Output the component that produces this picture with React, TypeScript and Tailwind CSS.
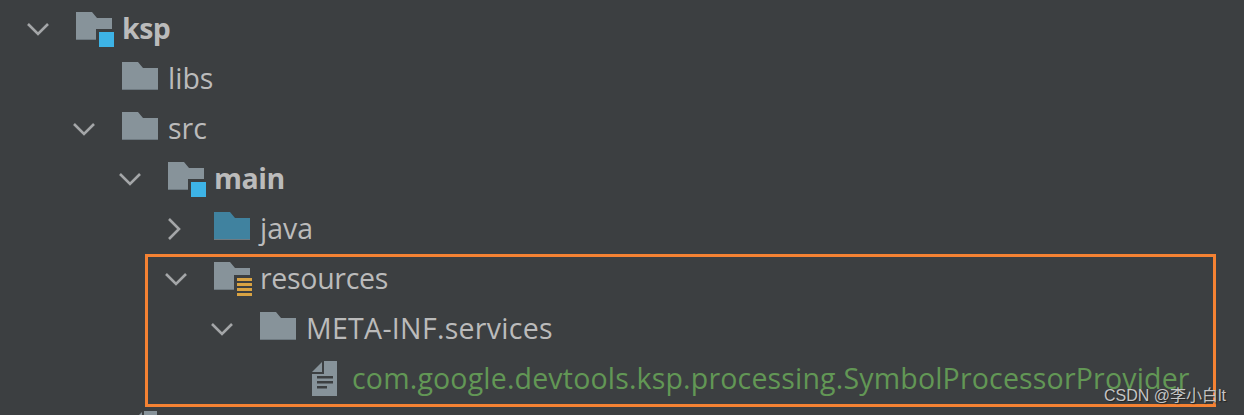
const FOLDER = 'M0 2H16L21 8H36V30H0Z'

function Folder({ color = '#87939a', badge }: { color?: string; badge?: 'module' | 'resources' }) {
  return (
    <svg width="38" height="38" viewBox="0 0 38 38" className="shrink-0">
      <path d={FOLDER} fill={color} />
      <rect x="0" y="29" width="36" height="1" fill="#6f7a81" />
      {badge === 'module' && (
        <>
          <rect x="20" y="19" width="18" height="19" fill="#3c3f41" />
          <rect x="23" y="22" width="15" height="15" fill="#3db3e6" />
        </>
      )}
      {badge === 'resources' && (
        <>
          <rect x="20" y="15" width="18" height="23" fill="#3c3f41" />
          <rect x="23" y="18" width="15" height="3" fill="#d9a343" />
          <rect x="23" y="23" width="15" height="3" fill="#d9a343" />
          <rect x="23" y="28" width="15" height="3" fill="#d9a343" />
          <rect x="23" y="33" width="15" height="3" fill="#d9a343" />
        </>
      )}
    </svg>
  )
}

function FileIcon() {
  return (
    <svg width="38" height="38" viewBox="0 0 38 38" className="shrink-0">
      <path d="M0 12L10 2V12Z" fill="#87939a" />
      <path d="M12 1H25V36H0V14H12Z" fill="#87939a" />
      <rect x="5" y="16" width="16" height="2.5" fill="#3c3f41" />
      <rect x="5" y="21" width="16" height="2.5" fill="#3c3f41" />
      <rect x="5" y="26" width="10" height="2.5" fill="#3c3f41" />
    </svg>
  )
}

function Chevron({ open }: { open: boolean }) {
  return (
    <svg width="24" height="24" viewBox="0 0 24 24" fill="none" stroke="#a4a6a8" strokeWidth="2.6" className="shrink-0">
      {open ? <path d="M2 7L12 17L22 7" /> : <path d="M5 2L15 12L5 22" />}
    </svg>
  )
}

function Row({ indent, chevron, icon, children }: { indent: string; chevron?: 'open' | 'closed'; icon: React.ReactNode; children: React.ReactNode }) {
  return (
    <div className={`flex h-[50px] items-center ${indent}`}>
      <div className="flex w-[63px] shrink-0 justify-start pl-[13px]">
        {chevron && <Chevron open={chevron === 'open'} />}
      </div>
      {icon}
      {children}
    </div>
  )
}

export default function App() {
  const label = 'ml-[8px] pb-[2px] text-[28.5px] leading-[48px] whitespace-nowrap'
  return (
    <div className="relative h-[415px] w-[1244px] overflow-hidden bg-[#3c3f41] pt-[4px] font-['Open_Sans','Noto_Sans',sans-serif] text-[#bbbbbb]">
      <Row indent="pl-[13px]" chevron="open" icon={<Folder badge="module" />}>
        <span className={`${label} font-bold tracking-[-0.5px]`}>ksp</span>
      </Row>
      <Row indent="pl-[59px]" icon={<Folder />}>
        <span className={label}>libs</span>
      </Row>
      <Row indent="pl-[59px]" chevron="open" icon={<Folder />}>
        <span className={label}>src</span>
      </Row>
      <Row indent="pl-[105px]" chevron="open" icon={<Folder badge="module" />}>
        <span className={`${label} font-bold tracking-[-0.5px]`}>main</span>
      </Row>
      <Row indent="pl-[151px]" chevron="closed" icon={<Folder color="#40829f" />}>
        <span className={label}>java</span>
      </Row>
      <Row indent="pl-[151px]" chevron="open" icon={<Folder badge="resources" />}>
        <span className={`${label} tracking-[-0.3px]`}>resources</span>
      </Row>
      <Row indent="pl-[197px]" chevron="open" icon={<Folder />}>
        <span className={`${label} tracking-[0.3px]`}>META-INF.services</span>
      </Row>
      <Row indent="pl-[249px]" icon={<FileIcon />}>
        <span className="ml-[2px] pb-[2px] text-[28.5px] leading-[48px] tracking-[0.18px] whitespace-nowrap text-[#629755]">com.google.devtools.ksp.processing.SymbolProcessorProvider</span>
      </Row>
      <Row indent="pl-[69px]" icon={<FileIcon />}>
        <span />
      </Row>

      {/* highlight box over the tree */}
      <div className="absolute left-[145px] top-[254px] h-[153px] w-[1071px] border-[3px] border-[#f58233]" />

      {/* watermark */}
      <span className="absolute left-[1104px] top-[384px] font-['Liberation_Sans','Noto_Sans_CJK_SC',sans-serif] text-[16px] leading-[24px] text-[#c4c4c4] whitespace-nowrap [text-shadow:1px_1px_1px_#222222]">
        CSDN @李小白lt
      </span>
    </div>
  )
}
